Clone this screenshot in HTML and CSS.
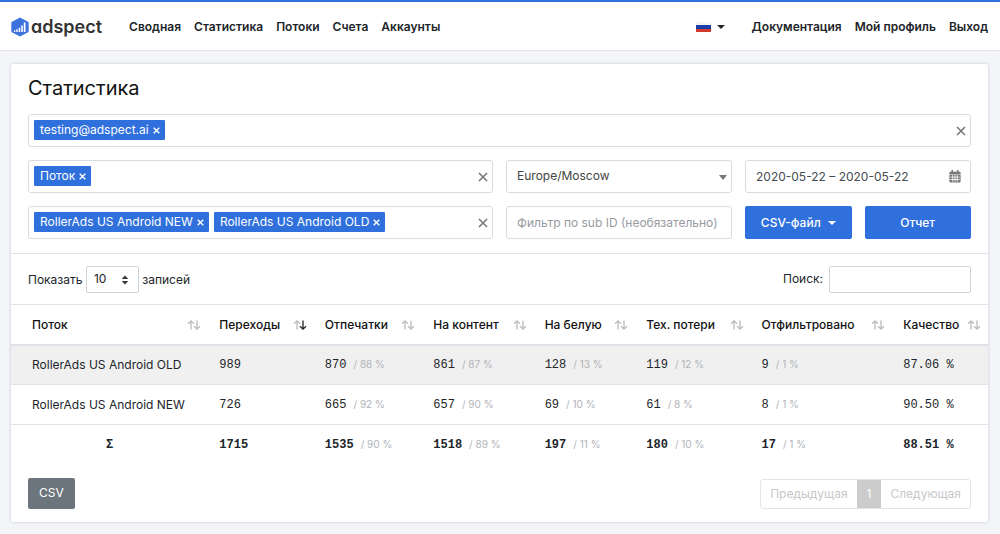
FILE: index.html
```html
<!DOCTYPE html>
<html lang="ru">
<head>
<meta charset="utf-8">
<meta name="viewport" content="width=device-width, initial-scale=1">
<title>Adspect — Статистика</title>
<link rel="stylesheet" href="styles.css">
</head>
<body>
<svg class="sprite" aria-hidden="true">
  <symbol id="sort" viewBox="0 0 14 12"><path class="up" d="M4 10.5V1.8M1 4.8l3-3 3 3"/><path class="down" d="M10 1.5v8.700M7 7.200l3 3 3-3"/></symbol>
  <symbol id="cross" viewBox="0 0 10 10"><path d="M1 1l8 8M9 1L1 9"/></symbol>
</svg>
<header class="topbar">
  <a class="brand" href="#">
    <svg class="brand-mark" viewBox="0 0 18 20" aria-hidden="true"><path fill="#3b72dc" d="M9 0.500l8 4.200q.7.400.7 1.200v8.200q0 .8-.7 1.200L9 19.500l-8-4.200q-.7-.4-.7-1.200V5.900q0-.8.7-1.200z"/><path fill="#fff" d="M3 13.200h1.300V15H3zM5.300 12.200h1.400V15H5.300zM7.700 10.800h1.500V15H7.700zM10.200 8.600h1.600V15h-1.600zM12.800 5.600h1.700V15h-1.700z"/></svg>
    <span>adspect</span>
  </a>
  <nav class="nav nav-main">
    <a href="#">Сводная</a><a href="#">Статистика</a><a href="#">Потоки</a><a href="#">Счета</a><a href="#">Аккаунты</a>
  </nav>
  <button class="lang" type="button" aria-label="Язык"><span class="flag"></span><span class="caret"></span></button>
  <nav class="nav">
    <a href="#">Документация</a><a href="#">Мой профиль</a><a href="#">Выход</a>
  </nav>
</header>
<main class="card">
  <form class="filters">
    <h1>Статистика</h1>
    <div class="grid">
      <div class="field tags full">
        <span class="tag">testing@adspect.ai<button type="button" aria-label="Убрать"><svg><use href="#cross"/></svg></button></span>
        <button class="clear" type="button" aria-label="Очистить"><svg><use href="#cross"/></svg></button>
      </div>
      <div class="field tags half">
        <span class="tag">Поток<button type="button" aria-label="Убрать"><svg><use href="#cross"/></svg></button></span>
        <button class="clear" type="button" aria-label="Очистить"><svg><use href="#cross"/></svg></button>
      </div>
      <div class="select-wrap">
        <select class="field" aria-label="Часовой пояс"><option>Europe/Moscow</option></select>
        <span class="arrow"></span>
      </div>
      <label class="field date">
        <input type="text" value="2020-05-22 – 2020-05-22" aria-label="Период">
        <svg class="calendar" viewBox="0 0 12 13" aria-hidden="true"><path fill="#777" d="M1 1.700h10q.6 0 .6.600v1.600H.4V2.300q0-.6.600-.6zM2.500 0h1.600v3H2.500zM7.900 0h1.600v3H7.900zM.4 4.600h11.200v7q0 .8-.8.8H1.200q-.8 0-.8-.8z"/><path stroke="#fff" stroke-width=".8" d="M1.300 7.100h9.400M1.300 9.500h9.400M3.700 5.200v6.600M6 5.200v6.600M8.300 5.200v6.600"/></svg>
      </label>
      <div class="field tags half">
        <span class="tag">RollerAds US Android NEW<button type="button" aria-label="Убрать"><svg><use href="#cross"/></svg></button></span>
        <span class="tag">RollerAds US Android OLD<button type="button" aria-label="Убрать"><svg><use href="#cross"/></svg></button></span>
        <button class="clear" type="button" aria-label="Очистить"><svg><use href="#cross"/></svg></button>
      </div>
      <input class="field" type="text" placeholder="Фильтр по sub ID (необязательно)" aria-label="Фильтр по sub ID">
      <div class="actions">
        <button class="btn" type="button">CSV-файл<span class="caret"></span></button>
        <button class="btn" type="button">Отчет</button>
      </div>
    </div>
  </form>
  <div class="tools">
    <label>Показать
      <span class="length"><select><option>10</option></select><svg viewBox="0 0 8 10" aria-hidden="true"><path d="M4 .5L7.300 4H.7zM4 9.500L.7 6h6.600z"/></svg></span>
      записей</label>
    <label class="search">Поиск:<input type="search"></label>
  </div>
  <table>
    <colgroup><col class="c1"><col class="c2"><col class="c3"><col class="c4"><col class="c5"><col class="c6"><col class="c7"><col class="c8"></colgroup>
    <thead>
      <tr>
        <th><div>Поток<svg><use href="#sort"/></svg></div></th>
        <th class="sorted"><div>Переходы<svg viewBox="0 0 14 12"><path class="up" d="M4 10.500V1.800M1 4.800l3-3 3 3"/><path class="down" d="M10 1.500v8.700M7 7.200l3 3 3-3"/></svg></div></th>
        <th><div>Отпечатки<svg><use href="#sort"/></svg></div></th>
        <th><div>На контент<svg><use href="#sort"/></svg></div></th>
        <th><div>На белую<svg><use href="#sort"/></svg></div></th>
        <th><div>Тех. потери<svg><use href="#sort"/></svg></div></th>
        <th><div>Отфильтровано<svg><use href="#sort"/></svg></div></th>
        <th><div>Качество<svg><use href="#sort"/></svg></div></th>
      </tr>
    </thead>
    <tbody>
      <tr class="active"><td class="name">RollerAds US Android OLD</td><td>989</td><td>870<small>/ 88 %</small></td><td>861<small>/ 87 %</small></td><td>128<small>/ 13 %</small></td><td>119<small>/ 12 %</small></td><td>9<small>/ 1 %</small></td><td>87.06 %</td></tr>
      <tr><td class="name">RollerAds US Android NEW</td><td>726</td><td>665<small>/ 92 %</small></td><td>657<small>/ 90 %</small></td><td>69<small>/ 10 %</small></td><td>61<small>/ 8 %</small></td><td>8<small>/ 1 %</small></td><td>90.50 %</td></tr>
    </tbody>
    <tfoot>
      <tr><td class="sum">Σ</td><td>1715</td><td>1535<small>/ 90 %</small></td><td>1518<small>/ 89 %</small></td><td>197<small>/ 11 %</small></td><td>180<small>/ 10 %</small></td><td>17<small>/ 1 %</small></td><td>88.51 %</td></tr>
    </tfoot>
  </table>
  <div class="bottom">
    <button class="csv" type="button">CSV</button>
    <nav class="pages" aria-label="Страницы"><a href="#">Предыдущая</a><a class="current" href="#">1</a><a href="#">Следующая</a></nav>
  </div>
</main>
</body>
</html>
```
FILE: styles.css
```css
* { box-sizing: border-box; }
body { margin: 0; background: #f3f5f9; color: #212529; font: 12px/18px Inter, "Noto Sans", sans-serif; }
button, input, select { font: inherit; color: inherit; margin: 0; }
button { cursor: pointer; border: 0; background: none; padding: 0; }
a { color: inherit; text-decoration: none; }
.sprite { display: none; }

.topbar { display: flex; align-items: center; height: 51px; padding: 2px 12px 0 11px; background: #fff; border-top: 2px solid #2f70dd; border-bottom: 1px solid #e3e5e8; }
.brand { display: flex; align-items: center; gap: 2px; margin-right: 27px; color: #333; font-size: 18px; font-weight: 600; line-height: 24px; font-feature-settings: "cv11"; }
.brand-mark { width: 18px; height: 20px; }
.nav { display: flex; gap: 13px; font-weight: 600; }
.nav-main { margin-right: auto; }
.lang { display: flex; align-items: center; gap: 6px; margin-right: 27px; }
.flag { width: 15px; height: 10px; background: linear-gradient(#f4f4f6 0 30%, #1b3fa8 30% 70%, #d23a2e 70%); }
.caret { border: 4px solid transparent; border-top-color: currentColor; border-bottom: 0; }

.card { margin: 13px 12px 11px 11px; background: #fff; border-radius: 2px; box-shadow: 0 0 3px rgba(40, 50, 70, .25); }
.filters { padding: 11px 17px 14px; border-bottom: 1px solid #e2e5e9; }
h1 { margin: 0 0 13px; font-size: 20px; line-height: 26px; font-weight: 400; color: #111; }
.grid { display: grid; grid-template-columns: repeat(4, minmax(0, 1fr)); gap: 13px; }
.full { grid-column: 1 / -1; }
.half { grid-column: span 2; }
.field { width: 100%; height: 33px; border: 1px solid #d8dbe2; border-radius: 3px; background: #fff; padding: 0 10px; }
.tags { display: flex; align-items: flex-start; gap: 5px; padding: 5px 4px 5px 5px; }
.tag { display: flex; align-items: center; gap: 4px; height: 20px; padding: 0 5px 0 6px; border-radius: 1px; background: #2f70dd; color: #fff; white-space: nowrap; }
.tag button { display: flex; }
.tag svg { width: 7px; height: 7px; stroke: #fff; stroke-width: 2; }
.clear { display: flex; align-self: center; margin-left: auto; }
.clear svg { width: 10px; height: 10px; stroke: #777; stroke-width: 1.6; }
.select-wrap { position: relative; }
select { appearance: none; }
.select-wrap .field { padding-bottom: 2px; color: #444; }
.arrow { position: absolute; right: 5px; top: 15px; border: 4px solid transparent; border-top: 5px solid #777; border-bottom: 0; pointer-events: none; }
.date { display: flex; align-items: center; padding-right: 9px; }
.date input { flex: 1; min-width: 0; border: 0; padding: 0; color: #444b52; outline: 0; }
.calendar { width: 12px; height: 13px; }
::placeholder { color: #969ba3; opacity: 1; }
.actions { display: flex; gap: 13px; }
.btn { flex: 1 1 0; display: flex; align-items: center; justify-content: center; gap: 7px; height: 33px; border-radius: 2px; background: #2f70dd; color: #fff; font-weight: 500; }

.tools { display: flex; justify-content: space-between; align-items: center; height: 50px; padding: 0 17px; }
.length { position: relative; display: inline-block; }
.length select { width: 53px; height: 27px; padding: 0 7px; border: 1px solid #ced4da; border-radius: 2px; background: #fff; }
.length svg { position: absolute; right: 10px; top: 9px; width: 8px; height: 10px; fill: #343a40; pointer-events: none; }
.search { display: flex; align-items: center; gap: 6px; }
.search input { width: 142px; height: 27px; border: 1px solid #ced4da; border-radius: 2px; background: #fff; appearance: none; }

table { width: 100%; table-layout: fixed; border-collapse: collapse; font-family: "Liberation Mono", monospace; }
.c1 { width: 20.2%; } .c2 { width: 10.8%; } .c3 { width: 11.1%; } .c4 { width: 11.4%; }
.c5 { width: 10.4%; } .c6 { width: 11.8%; } .c7 { width: 14.5%; } .c8 { width: 9.8%; }
th, td { height: 40px; padding: 1px 7px 0 11px; text-align: left; vertical-align: middle; white-space: nowrap; }
th { font-family: Inter, sans-serif; font-weight: 500; color: #111; border-top: 1px solid #e2e5e9; border-bottom: 2px solid #dee2e6; }
th:first-child, td:first-child { padding-left: 21px; }
th div { display: flex; align-items: center; justify-content: space-between; }
th svg { flex: none; width: 14px; height: 12px; fill: none; stroke: #bbb; stroke-width: 1.3; }
.sorted .down { stroke: #222; }
tbody tr { border-bottom: 1px solid #e2e5e9; }
.active { background: #f0f0f0; }
.name { font-family: Inter, sans-serif; }
small { margin-left: 7px; font: 10px Inter, sans-serif; color: #b0b3b8; }
tfoot td { height: 39px; font-weight: 700; }
tfoot small { font-weight: 400; }
td.sum { padding-right: 21px; text-align: center; }
.bottom { display: flex; justify-content: space-between; align-items: flex-end; padding: 14px 17px 13px; }
.csv { height: 31px; padding: 0 11px; border-radius: 2px; background: #6c757d; color: #fff; }
.pages { display: flex; border: 1px solid #e2e4e7; border-radius: 3px; color: #c8c8c8; line-height: 28px; }
.pages a { padding: 0 9px; }
.pages .current { padding: 0 10px; background: #ccc; color: #fff; }
```
